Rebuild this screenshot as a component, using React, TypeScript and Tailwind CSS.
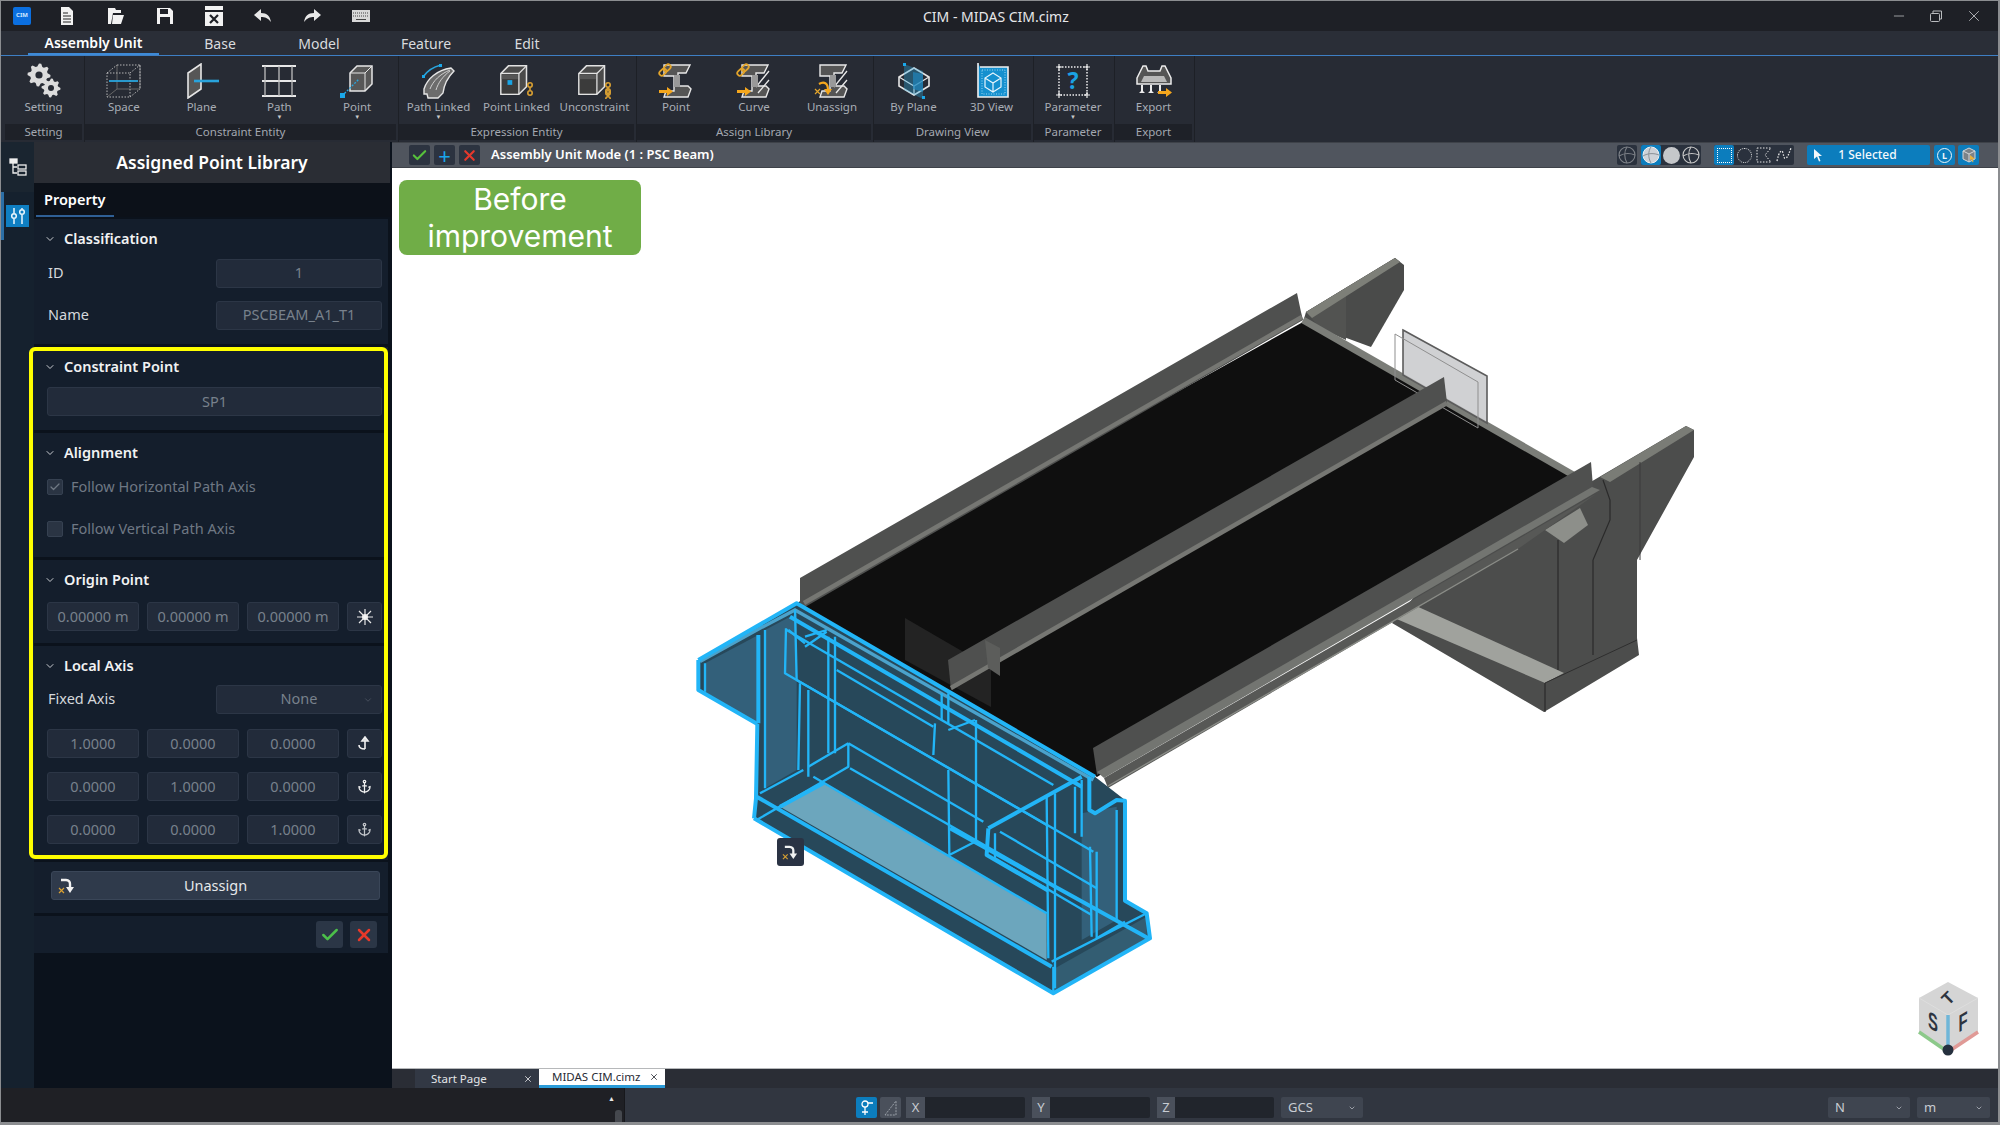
import { ReactNode } from "react";
import { Anchor, Check, ChevronDown, Minus, X } from "lucide-react";

function gearPath(cx: number, cy: number, r: number, teeth: number) {
  let d = "";
  const n = teeth * 4;
  for (let i = 0; i < n; i++) {
    const a = (i / n) * Math.PI * 2;
    const rr = i % 4 < 2 ? r : r * 0.76;
    d += `${i === 0 ? "M" : "L"}${(cx + rr * Math.cos(a)).toFixed(2)} ${(cy + rr * Math.sin(a)).toFixed(2)}`;
  }
  return d + "Z";
}

const Ico = ({ children, w = 36 }: { children: ReactNode; w?: number }) => (
  <svg width={w} height={36} viewBox="0 0 36 36" fill="none" className="block">
    {children}
  </svg>
);

const Chain = ({ x = 0, y = 0 }: { x?: number; y?: number }) => (
  <g transform={`translate(${x} ${y})`} stroke="#d9a032" strokeWidth="1.6" fill="none">
    <circle cx="3" cy="2" r="2.2" />
    <path d="M3 4.2v3" />
    <circle cx="3" cy="10" r="2.2" />
  </g>
);

const YellowArrow = ({ x = 0, y = 0 }: { x?: number; y?: number }) => (
  <path transform={`translate(${x} ${y})`} d="M0 3h8V0l6 4.5L8 9V6H0z" fill="#f5a71d" />
);

const Link8 = ({ x = 0, y = 0 }: { x?: number; y?: number }) => (
  <g transform={`translate(${x} ${y}) rotate(-45)`} stroke="#e3a52b" strokeWidth="1.8" fill="none">
    <rect x="-7" y="-2.5" width="8" height="5" rx="2.5" />
    <rect x="-1" y="-2.5" width="8" height="5" rx="2.5" />
  </g>
);

const Cube = ({ dot }: { dot?: boolean }) => (
  <g>
    <path d="M3 11l8-8h19v22l-8 8H3z" fill="#4a4a4a" stroke="#e2e2e2" strokeWidth="1.6" />
    <path d="M3 11h19v22" stroke="#e2e2e2" strokeWidth="1.3" />
    <path d="M22 11l8-8" stroke="#e2e2e2" strokeWidth="1.3" />
    <path d="M4 12h17v20H4z" fill="#3b3b3b" />
    <path d="M4 12h17v5H4z" fill="#565656" />
    {dot && <rect x="10" y="18" width="5" height="5" fill="#18a5e6" />}
  </g>
);

const Beam = ({ slant }: { slant?: boolean }) => (
  <g>
    <path d="M6 2h26l-4 8H20v13h10l3 3-3 8H6l2-6h8V13H6z" fill="#555" stroke="#e8e8e8" strokeWidth="1.4" />
    {slant && <path d="M20 24L33 8M22 30l11-13" stroke="#e8e8e8" strokeWidth="1.3" />}
    <path d="M16 12h6v12h-6z" fill="#999" />
  </g>
);

const ICONS: Record<string, ReactNode> = {
  setting: (
    <Ico>
      <path d={gearPath(13, 12, 11.5, 8)} fill="#dcdcdc" />
      <circle cx="13" cy="12" r="3.6" fill="#272b34" />
      <path d={gearPath(25, 25, 9.5, 8)} fill="#dcdcdc" />
      <circle cx="25" cy="25" r="3" fill="#272b34" />
    </Ico>
  ),
  space: (
    <Ico>
      <path d="M11 2v24H34M1 34l10-8" stroke="#666" />
      <g stroke="#b4b4b4" strokeDasharray="1.5 1.5">
        <rect x="1" y="10" width="23" height="24" />
        <path d="M11 2h23v24M1 10l10-8M24 10l10-8M24 34l10-8M34 2v24" />
      </g>
      <path d="M3 18h29" stroke="#2aa5dd" strokeWidth="1.8" />
    </Ico>
  ),
  plane: (
    <Ico>
      <path d="M4 10L17 1v25L4 35z" fill="#565656" stroke="#e6e6e6" strokeWidth="1.6" />
      <path d="M10 18h25" stroke="#29a3dc" strokeWidth="2.6" />
    </Ico>
  ),
  path: (
    <Ico>
      <path d="M1 3h34M1 18h34M1 33h34" stroke="#e8e8e8" strokeWidth="2.2" />
      <path d="M4 3v30M18 3v30M31 3v30" stroke="#bdbdbd" strokeWidth="1.3" />
    </Ico>
  ),
  vertex: (
    <Ico>
      <path d="M11 10l7-7h15v18l-7 7H11z" fill="#575757" stroke="#e6e6e6" strokeWidth="1.5" />
      <path d="M11 10h15v18M26 10l7-7" stroke="#e6e6e6" />
      <path d="M3 33L20 16" stroke="#27a6e0" strokeDasharray="2 1.5" strokeWidth="1.4" />
      <rect x="1" y="30" width="5" height="5" fill="#1aa8ea" />
    </Ico>
  ),
  pathLinked: (
    <Ico>
      <path d="M3 26C6 16 16 7 30 5l3 3C26 15 23 22 22 30l-5 5H7l-1-4H3z" fill="#6c6c6c" stroke="#e6e6e6" strokeWidth="1.4" />
      <path d="M9 26C12 18 19 11 29 7M15 27c2-7 7-14 14-19" stroke="#cfcfcf" />
      <path d="M2 14C6 8 12 4 20 2" stroke="#2aa5dd" strokeWidth="1.6" />
      <rect x="1" y="12" width="3" height="3" fill="#1aa8ea" />
      <rect x="18" y="1" width="3" height="3" fill="#1aa8ea" />
    </Ico>
  ),
  pointLinked: (
    <Ico w={38}>
      <g transform="translate(-1 0) scale(.95)">
        <Cube dot />
      </g>
      <Chain x={28} y={20} />
    </Ico>
  ),
  unconstraint: (
    <Ico w={38}>
      <g transform="translate(-1 0) scale(.95)">
        <Cube />
      </g>
      <Chain x={28} y={20} />
      <Chain x={28} y={26} />
    </Ico>
  ),
  aPoint: (
    <Ico>
      <Beam />
      <Link8 x={7} y={7} />
      <YellowArrow x={1} y={24} />
    </Ico>
  ),
  aCurve: (
    <Ico>
      <Beam slant />
      <Link8 x={7} y={7} />
      <YellowArrow x={1} y={24} />
    </Ico>
  ),
  aUnassign: (
    <Ico>
      <Beam slant />
      <path d="M5 21c5-3 9-1 9 6" stroke="#f5a71d" strokeWidth="2.2" />
      <path d="M10 26h8l-4 6z" fill="#f5a71d" />
      <path d="M1 26l5 5M6 26l-5 5" stroke="#e3a52b" strokeWidth="1.2" />
    </Ico>
  ),
  byPlane: (
    <Ico>
      <path d="M18 5l15 9v9l-15 9-15-9v-9z" stroke="#e6e6e6" strokeWidth="1.6" />
      <path d="M3 14l15 9 15-9M18 23v9" stroke="#e6e6e6" strokeWidth="1.2" />
      <path d="M8 1l19 7v28L8 27z" fill="#2aa5dd" fillOpacity=".35" />
      <path d="M17 9l10 2v18l-10-3z" fill="#1f86bc" fillOpacity=".7" />
      <rect x="7" y="0" width="3" height="3" fill="#1aa8ea" />
      <rect x="26" y="33" width="3" height="3" fill="#1aa8ea" />
    </Ico>
  ),
  view3d: (
    <Ico>
      <path d="M4 0v34h30V4H6" fill="#1590cf" stroke="#f0f0f0" strokeWidth="1.6" />
      <rect x="8" y="7" width="23" height="24" stroke="#9ad7f2" strokeDasharray="1 1.5" />
      <path d="M19 10l8 5v9l-8 5-8-5v-9zM11 15l8 5 8-5M19 20v9" stroke="#e8f6fd" strokeWidth="1.2" />
    </Ico>
  ),
  parameter: (
    <Ico>
      <rect x="4" y="4" width="28" height="28" stroke="#eee" strokeWidth="1.5" strokeDasharray="1.5 1.5" />
      <path d="M1 4h6M29 4h6M1 32h6M29 32h6M4 1v6M32 1v6M4 29v6M32 29v6" stroke="#eee" strokeWidth="1.2" />
      <text x="18" y="26" textAnchor="middle" fill="#1aa2e4" fontSize="23" fontWeight="700" fontFamily="'Noto Sans', sans-serif">?</text>
    </Ico>
  ),
  export: (
    <Ico>
      <path d="M1 15l6-12h3l2 5h12l2-5h3l6 12v6H1z" fill="#555" stroke="#ececec" strokeWidth="1.5" />
      <path d="M8 13h20l3 6H5z" fill="#b8b8b8" />
      <path d="M6 22v6M15 22v6M24 22v6" stroke="#ececec" strokeWidth="2" />
      <path d="M3 30l3-3 3 3zM12 30l3-3 3 3zM21 30l3-3 3 3z" fill="#ececec" />
      <YellowArrow x={22} y={25} />
    </Ico>
  ),
};

type RibbonItem = { label: string; icon: string; drop?: boolean };

const RibbonGroup = ({ title, items, width }: { title: string; items: RibbonItem[]; width: string }) => (
  <div className={`flex flex-col border-r border-[#1d2026] pr-[2px] ${width}`}>
    <div className="flex h-[68px] justify-center">
      {items.map((it) => (
        <div key={it.label + it.icon} className="flex w-[78px] flex-col items-center pt-[7px]">
          {ICONS[it.icon]}
          <span className="whitespace-nowrap text-[11.5px] leading-[16px] text-[#a9aeb6]">{it.label}</span>
          {it.drop && <span className="mt-[-1px] text-[6px] leading-[7px] text-[#c9c9c9]">▼</span>}
        </div>
      ))}
    </div>
    <div className="flex h-[16px] items-center justify-center bg-[#1e2128] text-[11.5px] text-[#a3a8b0]">{title}</div>
  </div>
);

const Field = ({ children, className = "" }: { children?: ReactNode; className?: string }) => (
  <div className={`flex h-[29px] items-center justify-center rounded-[3px] border border-[#2c3646] bg-[#222b3a] text-[14.5px] text-[#78818c] ${className}`}>
    {children}
  </div>
);

const Section = ({ title, children, className = "" }: { title: string; children: ReactNode; className?: string }) => (
  <div className={`bg-[#141e2c] pl-[13px] pr-[6px] ${className}`}>
    <div className="flex h-[40px] items-center">
      <ChevronDown size={12} strokeWidth={2} className="ml-[-3px] text-[#c9ccd1]" />
      <span className="ml-[8px] text-[14.5px] font-semibold text-[#f1f2f3]">{title}</span>
    </div>
    {children}
  </div>
);

const LabelRow = ({ label, children, className = "" }: { label: string; children: ReactNode; className?: string }) => (
  <div className={`flex items-center justify-between ${className}`}>
    <span className="pl-[1px] text-[14.5px] text-[#d5d8dc]">{label}</span>
    {children}
  </div>
);

const CheckRow = ({ label, checked, className = "" }: { label: string; checked?: boolean; className?: string }) => (
  <div className={`flex h-[21px] items-center ${className}`}>
    <div className="flex h-[16px] w-[16px] items-center justify-center rounded-[2px] border border-[#364151] bg-[#2a3443]">
      {checked && <Check size={12} strokeWidth={2.5} className="text-[#6f7884]" />}
    </div>
    <span className="ml-[8px] text-[14.5px] text-[#6f7884]">{label}</span>
  </div>
);

const AxisRow = ({ values, icon, className = "" }: { values: string[]; icon: ReactNode; className?: string }) => (
  <div className={`flex gap-[8px] ${className}`}>
    {values.map((v, i) => (
      <Field key={i} className="w-[92px]">
        {v}
      </Field>
    ))}
    <Field className="w-[35px] text-white">{icon}</Field>
  </div>
);

const UnassignIcon = ({ size = 18 }: { size?: number }) => (
  <svg width={size} height={size} viewBox="0 0 18 18" fill="none">
    <path d="M3 3h5c3 0 4 2 4 4v4" stroke="#f2f2f2" strokeWidth="2.4" />
    <path d="M8 10h8l-4 6z" fill="#f2f2f2" />
    <path d="M1 11l5 5M6 11l-5 5" stroke="#d9a032" strokeWidth="1.2" />
  </svg>
);

const Sphere = ({ stroke = "#c8c8c8" }: { stroke?: string }) => (
  <svg width="18" height="18" viewBox="0 0 18 18" fill="none" stroke={stroke} strokeWidth="1.1">
    <circle cx="9" cy="9" r="8" />
    <path d="M1 10c5-3 11-3 16-1M9 1c-3 4-3 11 0 16" />
  </svg>
);

const BarBtn = ({ children, className = "" }: { children: ReactNode; className?: string }) => (
  <div className={`flex h-[20px] w-[20px] items-center justify-center rounded-[2px] ${className}`}>{children}</div>
);

// wire lines of the selected unit, written in a 3x local grid
const WIRE_THICK = [
  "M55 240L350 70L1245 590",
  "M55 240V330L232 432",
  "M222 715L1120 1240L1410 1075L1400 1000L1335 962V662L1310 660L1245 700L1228 690V590",
  "M232 432L228 655L222 715",
  "M810 745L1405 1075",
  "M925 745L1205 590",
  "M925 745L920 825L1105 932",
  "M330 110L1205 620",
  "M235 165V430",
  "M230 650L1115 1160",
  "M300 680L430 610",
];
const WIRE_THIN = [
  "M75 250V335M255 150V625M318 145L315 280L1100 735",
  "M345 90L350 300M360 310L355 570M385 330V590",
  "M445 170V520M465 170V520M320 150L1120 615",
  "M470 270L760 440M350 300L1240 815",
  "M505 490V560L230 720M505 490L910 725M505 490L385 560",
  "M240 640L370 570M400 590L1100 1000M510 565L1105 905",
  "M765 430L760 525M785 340V420M805 340V430M805 570L808 825L885 785M888 420V790M885 420L805 450",
  "M945 760V835L1235 1005M960 755L1250 925",
  "M1100 650L1105 1135M1125 640V1225M1185 620V760M1205 600V770M1250 815V1075M1230 800L1235 1070",
  "M1310 690V1020M1115 1145L1400 1000M1250 1075L1335 1025M1120 1160V1240",
  "M375 170L440 150M375 200L440 155M325 150L375 190",
];

const Model = () => (
  <svg viewBox="392 168 1606 900" className="block h-full w-full">
    {/* far abutment */}
    <path d="M1306 312L1395 258L1404 265V290L1371 347L1303 322Z" fill="#4a4b4a" />
    <path d="M1306 312L1395 258L1400 262L1346 294V340L1320 328Z" fill="#525351" />
    <path d="M1306 312L1395 258L1400 262L1312 318Z" fill="#7d7f78" />
    {/* near abutment */}
    <path d="M1560 500L1686 426L1694 430V457L1637 560V638L1639 655L1544 712L1392 623L1420 590Z" fill="#4c4d4c" />
    <path d="M1600 477L1686 426L1694 430L1610 482Z" fill="#7a7c76" />
    <path d="M1414 605L1564 673L1545 683L1392 617Z" fill="#a0a29d" />
    <path d="M1545 683L1637 640" stroke="#2e2e2e" />
    <path d="M1545 683V712M1558 540V670M1593 560V655M1603 480L1610 500V520L1593 560" stroke="#2a2a2a" strokeWidth="1.2" fill="none" />
    <path d="M1545 530L1580 508L1588 525L1564 543Z" fill="#8d8f8a" />
    <path d="M1640 462V560" stroke="#3a3a3a" />
    {/* deck */}
    <path d="M797 603L1303 322L1575 478L1097 777Z" fill="#0f0f0f" />
    <path d="M1303 320L1575 476" stroke="#7b7d78" strokeWidth="7" />
    <path d="M905 618L991 668V707L905 660Z" fill="#232323" />
    {/* see-through plate */}
    <path d="M1403 330L1487 376V423L1403 375Z" fill="#c8c9cb" fillOpacity=".85" stroke="#5c5c5c" strokeWidth="1.6" />
    <path d="M1395 334L1478 382V428L1395 380Z" fill="none" stroke="#8f8f8f" />
    {/* left girder */}
    <path d="M800 578L1297 293L1301 312L1303 320L805 607L800 603Z" fill="#4f504f" />
    <path d="M804 603L1302 317" stroke="#767773" strokeWidth="4.5" />
    {/* mid girder */}
    <path d="M948 660L1444 377L1447 403L951 690Z" fill="#4f504f" />
    <path d="M951 688L1447 403" stroke="#767773" strokeWidth="4.5" />
    <path d="M985 640L1000 648V676L988 668Z" fill="#5c5d5b" />
    {/* right girder */}
    <path d="M1093 748L1591 462L1593 487L1097 775Z" fill="#4f504f" />
    <path d="M1104 778L1596 494L1518 549L1108 788Z" fill="#575856" />
    <path d="M1097 772L1592 487L1600 490L1104 778Z" fill="#737571" />
    <path d="M1108 786L1518 549" stroke="#8a8c87" strokeWidth="1.4" />
    {/* selected unit */}
    <g transform="translate(680 580) scale(.33333)">
      <path d="M55 240L350 70L1245 590L1335 660V962L1400 1000L1410 1075L1120 1240L222 715L232 432L55 330Z" fill="#27485a" />
      <path d="M75 250L235 165V432L75 335Z" fill="#33607a" />
      <path d="M255 150L350 100V570L255 625Z" fill="#33607a" />
      <path d="M300 680L430 610L1100 1000V1140Z" fill="#6ca6bd" />
      <path d="M1125 1165L1400 1010L1400 1075L1125 1230Z" fill="#335d72" />
      <path d="M1205 700L1310 680V1020L1205 1080Z" fill="#33607a" />
      <path d="M60 245L240 145L345 90L1240 600" stroke="#4ba2cb" strokeWidth="10" fill="none" />
      <g fill="none" stroke="#22b5f7" strokeLinejoin="round">
        {WIRE_THIN.map((d) => (
          <path key={d} d={d} strokeWidth="7" />
        ))}
        {WIRE_THICK.map((d) => (
          <path key={d} d={d} strokeWidth="12" />
        ))}
      </g>
    </g>
    {/* view cube */}
    <path d="M1948 982L1978 998V1032L1948 1052L1919 1032V998Z" fill="#d5d5d5" />
    <path d="M1919 998L1948 1015L1978 998M1948 1015V1050" stroke="#dedede" strokeWidth="1" fill="none" />
    <path d="M1948 1015V1050" stroke="#6fb6d8" strokeWidth="3.5" />
    <path d="M1919 1032L1948 1052" stroke="#8cc98a" strokeWidth="3.5" />
    <path d="M1978 1032L1948 1052" stroke="#e09a96" strokeWidth="3.5" />
    <circle cx="1948" cy="1050" r="5.5" fill="#25303e" />
    <g fill="#2d3440" fontWeight="700" fontFamily="'Liberation Sans', sans-serif" textAnchor="middle">
      <text transform="translate(1948 998) rotate(-45)" y="6" fontSize="17">T</text>
      <text transform="translate(1933 1030) skewY(30) scale(.62 1)" fontSize="24">S</text>
      <text transform="translate(1963 1030) skewY(-30) scale(.62 1)" fontSize="24">F</text>
    </g>
  </svg>
);

const TOOLS = [
  <svg key="new" width="16" height="18" viewBox="0 0 16 18"><path d="M2 0h8l4 4v14H2z" fill="#f2f2f2" /><path d="M4 6h5M4 9h8M4 12h8M4 15h8" stroke="#222" /></svg>,
  <svg key="open" width="18" height="18" viewBox="0 0 18 18"><path d="M1 1h7l1 2h5v3H6L4 17H1zM6 8h11l-3 9H5z" fill="#f2f2f2" /></svg>,
  <svg key="save" width="18" height="18" viewBox="0 0 18 18"><path d="M1 1h13l3 3v13H1z" fill="#f2f2f2" /><rect x="4" y="2" width="8" height="5" fill="#1e2026" /><rect x="4" y="10" width="10" height="7" fill="#1e2026" /></svg>,
  <svg key="close" width="18" height="20" viewBox="0 0 18 20"><rect width="18" height="20" fill="#f2f2f2" /><rect y="4" width="18" height="2" fill="#1e2026" /><path d="M5 9l8 8M13 9l-8 8" stroke="#1e2026" strokeWidth="2.2" /></svg>,
  <svg key="undo" width="18" height="14" viewBox="0 0 18 14"><path d="M7 0L0 6l7 6V8c4 0 7 1 10 5C16 7 13 4 7 4z" fill="#e8e8e8" /></svg>,
  <svg key="redo" width="18" height="14" viewBox="0 0 18 14"><path d="M11 0l7 6-7 6V8c-4 0-7 1-10 5C2 7 5 4 11 4z" fill="#e8e8e8" /></svg>,
  <svg key="keys" width="18" height="12" viewBox="0 0 18 12"><rect width="18" height="12" fill="#d8d8d8" /><path d="M1 3h16M1 6h16" stroke="#444" strokeDasharray="1 1" /><path d="M4 9.500h10" stroke="#444" /></svg>,
];

const TABS = [
  { label: "Assembly Unit", width: "w-[131px]", active: true },
  { label: "Base", width: "w-[122px]" },
  { label: "Model", width: "w-[76px]" },
  { label: "Feature", width: "w-[138px]" },
  { label: "Edit", width: "w-[64px]" },
];

export default function App() {
  return (
    <div className="flex h-[1125px] w-[2000px] flex-col overflow-hidden border-b-[3px] border-l border-r-2 border-t border-[#8b8d90] bg-[#1e2026] font-['Noto_Sans','Liberation_Sans',sans-serif]">
      {/* title bar */}
      <div className="relative flex h-[30px] shrink-0 items-center bg-[#1e2026]">
        <div className="flex items-center">
          <div className="w-[41px] pl-[12px]">
            <svg width="18" height="18" viewBox="0 0 18 18" className="block">
              <rect width="18" height="18" rx="2" fill="#0b6fe0" />
              <text x="9" y="10" textAnchor="middle" fontSize="6" fontWeight="700" fill="#cfe6ff" fontFamily="'Noto Sans', sans-serif">CIM</text>
            </svg>
          </div>
          {TOOLS.map((t, i) => (
            <div key={i} className="flex w-[49px] items-center justify-center">
              {t}
            </div>
          ))}
        </div>
        <span className="absolute left-[922px] top-[6px] text-[14px] leading-[20px] text-[#e6e7e9]">CIM - MIDAS CIM.cimz</span>
        <div className="ml-auto flex items-center gap-[21px] pr-[15px] text-[#b9bbbe]">
          <Minus size={16} strokeWidth={1.2} />
          <svg width="16" height="16" viewBox="0 0 16 16" fill="none" stroke="currentColor">
            <rect x="2.500" y="5.500" width="9" height="8" rx="1" />
            <path d="M5 5V3h8.500v8h-2" />
          </svg>
          <X size={18} strokeWidth={1.2} />
        </div>
      </div>
      {/* menu tabs */}
      <div className="flex h-[25px] shrink-0 border-b border-[#3e7fc4] bg-[#2a2e37] pl-[27px]">
        {TABS.map((t) => (
          <div
            key={t.label}
            className={`flex items-center justify-center text-[14px] ${t.width} ${
              t.active ? "border-b-2 border-[#3e8ad6] font-semibold text-white" : "text-[#d9dbde]"
            }`}
          >
            {t.label}
          </div>
        ))}
      </div>
      {/* ribbon */}
      <div className="flex h-[86px] shrink-0 bg-[#272b34] pl-[4px]">
        <RibbonGroup title="Setting" width="w-[80px]" items={[{ label: "Setting", icon: "setting" }]} />
        <RibbonGroup
          title="Constraint Entity"
          width="w-[314px]"
          items={[
            { label: "Space", icon: "space" },
            { label: "Plane", icon: "plane" },
            { label: "Path", icon: "path", drop: true },
            { label: "Point", icon: "vertex", drop: true },
          ]}
        />
        <RibbonGroup
          title="Expression Entity"
          width="w-[238px]"
          items={[
            { label: "Path Linked", icon: "pathLinked", drop: true },
            { label: "Point Linked", icon: "pointLinked" },
            { label: "Unconstraint", icon: "unconstraint" },
          ]}
        />
        <RibbonGroup
          title="Assign Library"
          width="w-[237px]"
          items={[
            { label: "Point", icon: "aPoint" },
            { label: "Curve", icon: "aCurve" },
            { label: "Unassign", icon: "aUnassign" },
          ]}
        />
        <RibbonGroup
          title="Drawing View"
          width="w-[160px]"
          items={[
            { label: "By Plane", icon: "byPlane" },
            { label: "3D View", icon: "view3d" },
          ]}
        />
        <RibbonGroup title="Parameter" width="w-[81px]" items={[{ label: "Parameter", icon: "parameter", drop: true }]} />
        <RibbonGroup title="Export" width="w-[80px]" items={[{ label: "Export", icon: "export" }]} />
      </div>
      {/* main */}
      <div className="relative flex h-[946px] shrink-0">
        {/* rail */}
        <div className="flex w-[33px] shrink-0 flex-col bg-[#15212e]">
          <div className="flex h-[50px] items-center justify-center bg-[#1a2530]">
            <svg width="18" height="18" viewBox="0 0 18 18" fill="none" stroke="#eee" strokeWidth="1.3">
              <rect x="1" y="1" width="7" height="4" fill="#eee" />
              <path d="M4 5v10h4M4 9h4" />
              <rect x="9" y="7" width="8" height="4" />
              <rect x="9" y="13" width="8" height="4" />
            </svg>
          </div>
          <div className="flex h-[48px] items-center border-l-[3px] border-[#2c6fa6] pl-[2px]">
            <div className="flex h-[22px] w-[23px] items-center justify-center bg-[#0f7fc2]">
              <svg width="18" height="18" viewBox="0 0 18 18" fill="none" stroke="#eaf6fd" strokeWidth="1.5">
                <path d="M5 1v5M5 12v5M13 1v1M13 8v9" />
                <circle cx="5" cy="9" r="2.300" />
                <circle cx="13" cy="5" r="2.300" />
              </svg>
            </div>
          </div>
          <div className="flex-1 bg-[#15212e]" />
        </div>
        {/* property panel */}
        <div className="flex w-[358px] shrink-0 flex-col bg-[#0b121c]">
          <div className="mr-[2px] flex h-[41px] shrink-0 items-center justify-center bg-[#2a2d34] text-[17.5px] font-semibold text-white">
            Assigned Point Library
          </div>
          <div className="flex h-[34px] shrink-0 bg-[#0c1119] pl-[2px]">
            <div className="flex w-[78px] items-center border-b-2 border-[#2f5f95] pl-[8px] pt-[1px] text-[14.5px] font-semibold text-white">Property</div>
          </div>
          <div className="flex flex-col gap-[3px] pr-[4px] pt-[2px]">
            <Section title="Classification" className="h-[125px]">
              <LabelRow label="ID" className="mt-[2px] h-[29px] pb-[5px]">
                <Field className="w-[166px]">1</Field>
              </LabelRow>
              <LabelRow label="Name" className="mt-[13px] h-[29px] pb-[5px]">
                <Field className="w-[166px]">PSCBEAM_A1_T1</Field>
              </LabelRow>
            </Section>
            <Section title="Constraint Point" className="h-[83px]">
              <Field>SP1</Field>
            </Section>
            <Section title="Alignment" className="h-[124px]">
              <CheckRow checked label="Follow Horizontal Path Axis" className="mt-[3px]" />
              <CheckRow label="Follow Vertical Path Axis" className="mt-[21px]" />
            </Section>
            <Section title="Origin Point" className="h-[83px]">
              <AxisRow
                className="mt-[2px]"
                values={["0.00000 m", "0.00000 m", "0.00000 m"]}
                icon={
                  <svg width="18" height="18" viewBox="0 0 18 18" stroke="#e8e8e8" strokeWidth="1.200">
                    <path d="M9 1v16M1 9h16M3 3l12 12M15 3L3 15" />
                    <circle cx="9" cy="9" r="2.500" fill="#f5f5f5" />
                  </svg>
                }
              />
            </Section>
            <Section title="Local Axis" className="h-[214px]">
              <LabelRow label="Fixed Axis" className="mt-[1px] h-[29px] pb-[5px]">
                <Field className="relative w-[166px]">
                  None
                  <ChevronDown size={10} className="absolute right-[8px] top-[9px] text-[#4d5663]" />
                </Field>
              </LabelRow>
              <AxisRow
                className="mt-[13px]"
                values={["1.0000", "0.0000", "0.0000"]}
                icon={
                  <svg width="14" height="16" viewBox="0 0 14 16" fill="none" stroke="#f0f0f0" strokeWidth="1.600">
                    <path d="M7 2v11M7 1l-3 4h6zM1 9c0 3 3 4 6 4" />
                  </svg>
                }
              />
              <AxisRow className="mt-[14px]" values={["0.0000", "1.0000", "0.0000"]} icon={<Anchor size={15} strokeWidth={2} className="text-[#f0f0f0]" />} />
              <AxisRow className="mt-[14px]" values={["0.0000", "0.0000", "1.0000"]} icon={<Anchor size={15} strokeWidth={2} className="text-[#c0c4c9]" />} />
            </Section>
            <div className="mt-[-1px] flex h-[51px] items-center bg-[#141e2c] pb-[4px] pl-[17px] pr-[6px]">
              <div className="relative flex h-[29px] w-[329px] items-center justify-center rounded-[3px] border border-[#3a4658] bg-[#2f3a4b] text-[14.5px] text-[#e6e8ea]">
                <span className="absolute left-[6px] top-[5px]">
                  <UnassignIcon />
                </span>
                Unassign
              </div>
            </div>
            <div className="flex h-[37px] items-center justify-end gap-[7px] bg-[#141e2c] pr-[11px]">
              <div className="flex h-[27px] w-[27px] items-center justify-center rounded-[3px] bg-[#2b3646]">
                <Check size={20} strokeWidth={3} className="text-[#4cc04a]" />
              </div>
              <div className="flex h-[27px] w-[27px] items-center justify-center rounded-[3px] bg-[#2b3646]">
                <X size={20} strokeWidth={3} className="text-[#e8392b]" />
              </div>
            </div>
          </div>
        </div>
        {/* viewport column */}
        <div className="flex min-w-0 flex-1 flex-col">
          <div className="flex h-[26px] shrink-0 items-center border-b border-t border-[#3e4249] bg-[#50555e] pl-[17px] pr-[19px]">
            <div className="flex gap-[4px]">
              <BarBtn className="w-[21px] bg-[#2c3340]"><Check size={17} strokeWidth={3} className="text-[#57c13c]" /></BarBtn>
              <BarBtn className="w-[21px] bg-[#2c3340]"><span className="text-[22px] leading-none text-[#1aa6ec]">+</span></BarBtn>
              <BarBtn className="w-[21px] bg-[#2c3340]"><X size={17} strokeWidth={3} className="text-[#e5392c]" /></BarBtn>
            </div>
            <span className="ml-[11px] text-[13px] font-semibold text-white">Assembly Unit Mode (1 : PSC Beam)</span>
            <div className="ml-auto flex items-center">
              <BarBtn className="bg-[#2a313d]"><Sphere stroke="#7e8288" /></BarBtn>
              <div className="ml-[4px] flex rounded-[2px] bg-[#2a313d]">
                <BarBtn className="bg-[#0c7dbd]">
                  <svg width="18" height="18" viewBox="0 0 18 18"><circle cx="9" cy="9" r="8" fill="#cfd3d8" stroke="#eef0f2" /><path d="M1 10c5-3 11-3 16-1M9 1c-3 4-3 11 0 16" stroke="#8a9096" fill="none" /></svg>
                </BarBtn>
                <BarBtn><span className="h-[17px] w-[17px] rounded-full bg-[#c5c7ca]" /></BarBtn>
                <BarBtn><Sphere /></BarBtn>
              </div>
              <div className="ml-[13px] flex rounded-[2px] bg-[#2a313d]">
                <BarBtn className="bg-[#0c7dbd]"><span className="h-[15px] w-[15px] border border-dotted border-white" /></BarBtn>
                <BarBtn><span className="h-[15px] w-[15px] rounded-full border border-dotted border-[#e6e6e6]" /></BarBtn>
                <BarBtn>
                  <svg width="16" height="16" viewBox="0 0 16 16" fill="none" stroke="#e6e6e6" strokeDasharray="1.500 1.500"><path d="M1 1h14l-6 7 6 7H1z" /></svg>
                </BarBtn>
                <BarBtn>
                  <svg width="16" height="16" viewBox="0 0 16 16" fill="none" stroke="#e6e6e6" strokeDasharray="1.500 1.500" strokeWidth="1.300"><path d="M1 14C3 4 6 2 7 6s1 6 3 5 3-5 5-10" /></svg>
                </BarBtn>
              </div>
              <div className="relative ml-[13px] flex h-[20px] w-[123px] items-center justify-center rounded-[2px] bg-[#0c7dbd] pr-[2px] text-[12px] font-medium text-[#f4f9fc]">
                <svg width="10" height="13" viewBox="0 0 10 13" className="absolute left-[6px] top-[4px]"><path d="M1 0l8 7H5.500l2 5-1.500.5-2-5L1 10z" fill="#f2f7fa" /></svg>
                1 Selected
              </div>
              <BarBtn className="ml-[4px] w-[21px] bg-[#0c7dbd]">
                <span className="flex h-[15px] w-[15px] items-center justify-center rounded-full border border-[#eef6fb] text-[9px] font-bold leading-none text-[#eef6fb]">L</span>
              </BarBtn>
              <BarBtn className="ml-[3px] w-[21px] bg-[#0c7dbd]">
                <svg width="16" height="16" viewBox="0 0 16 16"><path d="M8 1l6 3v8l-6 3-6-3V4z" fill="#7c8288" stroke="#d4d6d8" /><path d="M2 4l6 3 6-3M8 7v8" stroke="#d4d6d8" fill="none" /><path d="M9 8l5 4h-2.500l1 3-1 .300-1-3L9 13z" fill="#e9b23b" /></svg>
              </BarBtn>
            </div>
          </div>
          <div className="relative h-[900px] shrink-0 bg-white">
            <Model />
            <div className="absolute left-[7px] top-[12px] flex h-[75px] w-[242px] items-center justify-center rounded-[8px] bg-[#70ad47] text-center font-['Inter',sans-serif] text-[30px] leading-[37px] text-white">
              Before
              <br />
              improvement
            </div>
            <div className="absolute left-[385px] top-[670px] flex h-[28px] w-[27px] items-center justify-center rounded-[3px] bg-[#2a3344]">
              <UnassignIcon size={17} />
            </div>
          </div>
          <div className="flex h-[20px] shrink-0 border-t border-[#b6b8ba] bg-[#2a2d35] pl-[23px] text-[11.500px]">
            <div className="flex w-[124px] items-center justify-between bg-[#323844] pl-[16px] pr-[6px] text-[#e4e6e8]">
              <span>Start Page</span>
              <X size={10} />
            </div>
            <div className="flex w-[126px] items-center justify-between border-b-[3px] border-[#2a9bd8] bg-white pl-[13px] pr-[6px] text-[#2a2d35]">
              <span>MIDAS CIM.cimz</span>
              <X size={10} />
            </div>
          </div>
        </div>
        {/* highlight box */}
        <div className="pointer-events-none absolute left-[28px] top-[205px] h-[512px] w-[359px] rounded-[6px] border-4 border-[#ffff00]" />
      </div>
      {/* status bar */}
      <div className="flex h-[34px] shrink-0">
        <div className="relative w-[624px] shrink-0 border-r border-[#17181c] bg-[#1f2025]">
          <span className="absolute left-[607px] top-[7px] text-[7px] leading-[8px] text-[#e8e8e8]">▲</span>
          <div className="absolute bottom-0 left-[614px] h-[12px] w-[7px] rounded-t-[3px] bg-[#45484e]" />
        </div>
        <div className="flex flex-1 items-center bg-[#313640] pt-[5px] text-[13px] text-[#c8ccd2]">
          <div className="ml-[231px] flex h-[21px] w-[21px] items-center justify-center rounded-[2px] bg-[#0c7dbd]">
            <svg width="15" height="17" viewBox="0 0 15 17" fill="none" stroke="#fff" strokeWidth="1.300">
              <circle cx="6" cy="5" r="3" />
              <path d="M6 8v8M3 13h6M9 4h5" />
            </svg>
          </div>
          <div className="ml-[3px] flex h-[21px] w-[21px] items-center justify-center rounded-[2px] bg-[#4a505b]">
            <svg width="14" height="16" viewBox="0 0 14 16" fill="none" stroke="#9aa0a8"><path d="M1 15L12 1v14z" strokeDasharray="2 1" /></svg>
          </div>
          <div className="ml-[5px] flex h-[21px]">
            <span className="flex w-[19px] items-center justify-center bg-[#4a505b]">X</span>
            <span className="w-[100px] rounded-r-[2px] bg-[#21252c]" />
          </div>
          <div className="ml-[7px] flex h-[21px]">
            <span className="flex w-[18px] items-center justify-center bg-[#4a505b]">Y</span>
            <span className="w-[100px] rounded-r-[2px] bg-[#21252c]" />
          </div>
          <div className="ml-[7px] flex h-[21px]">
            <span className="flex w-[18px] items-center justify-center bg-[#4a505b]">Z</span>
            <span className="w-[99px] rounded-r-[2px] bg-[#21252c]" />
          </div>
          <div className="ml-[7px] flex h-[21px] w-[82px] items-center justify-between rounded-[2px] bg-[#3f4550] px-[7px]">
            GCS <ChevronDown size={8} />
          </div>
          <div className="ml-auto flex gap-[7px] pr-[8px]">
            <div className="flex h-[21px] w-[82px] items-center justify-between rounded-[2px] bg-[#3f4550] px-[7px]">
              N <ChevronDown size={8} />
            </div>
            <div className="flex h-[21px] w-[73px] items-center justify-between rounded-[2px] bg-[#3f4550] px-[7px]">
              m <ChevronDown size={8} />
            </div>
          </div>
        </div>
      </div>
    </div>
  );
}
